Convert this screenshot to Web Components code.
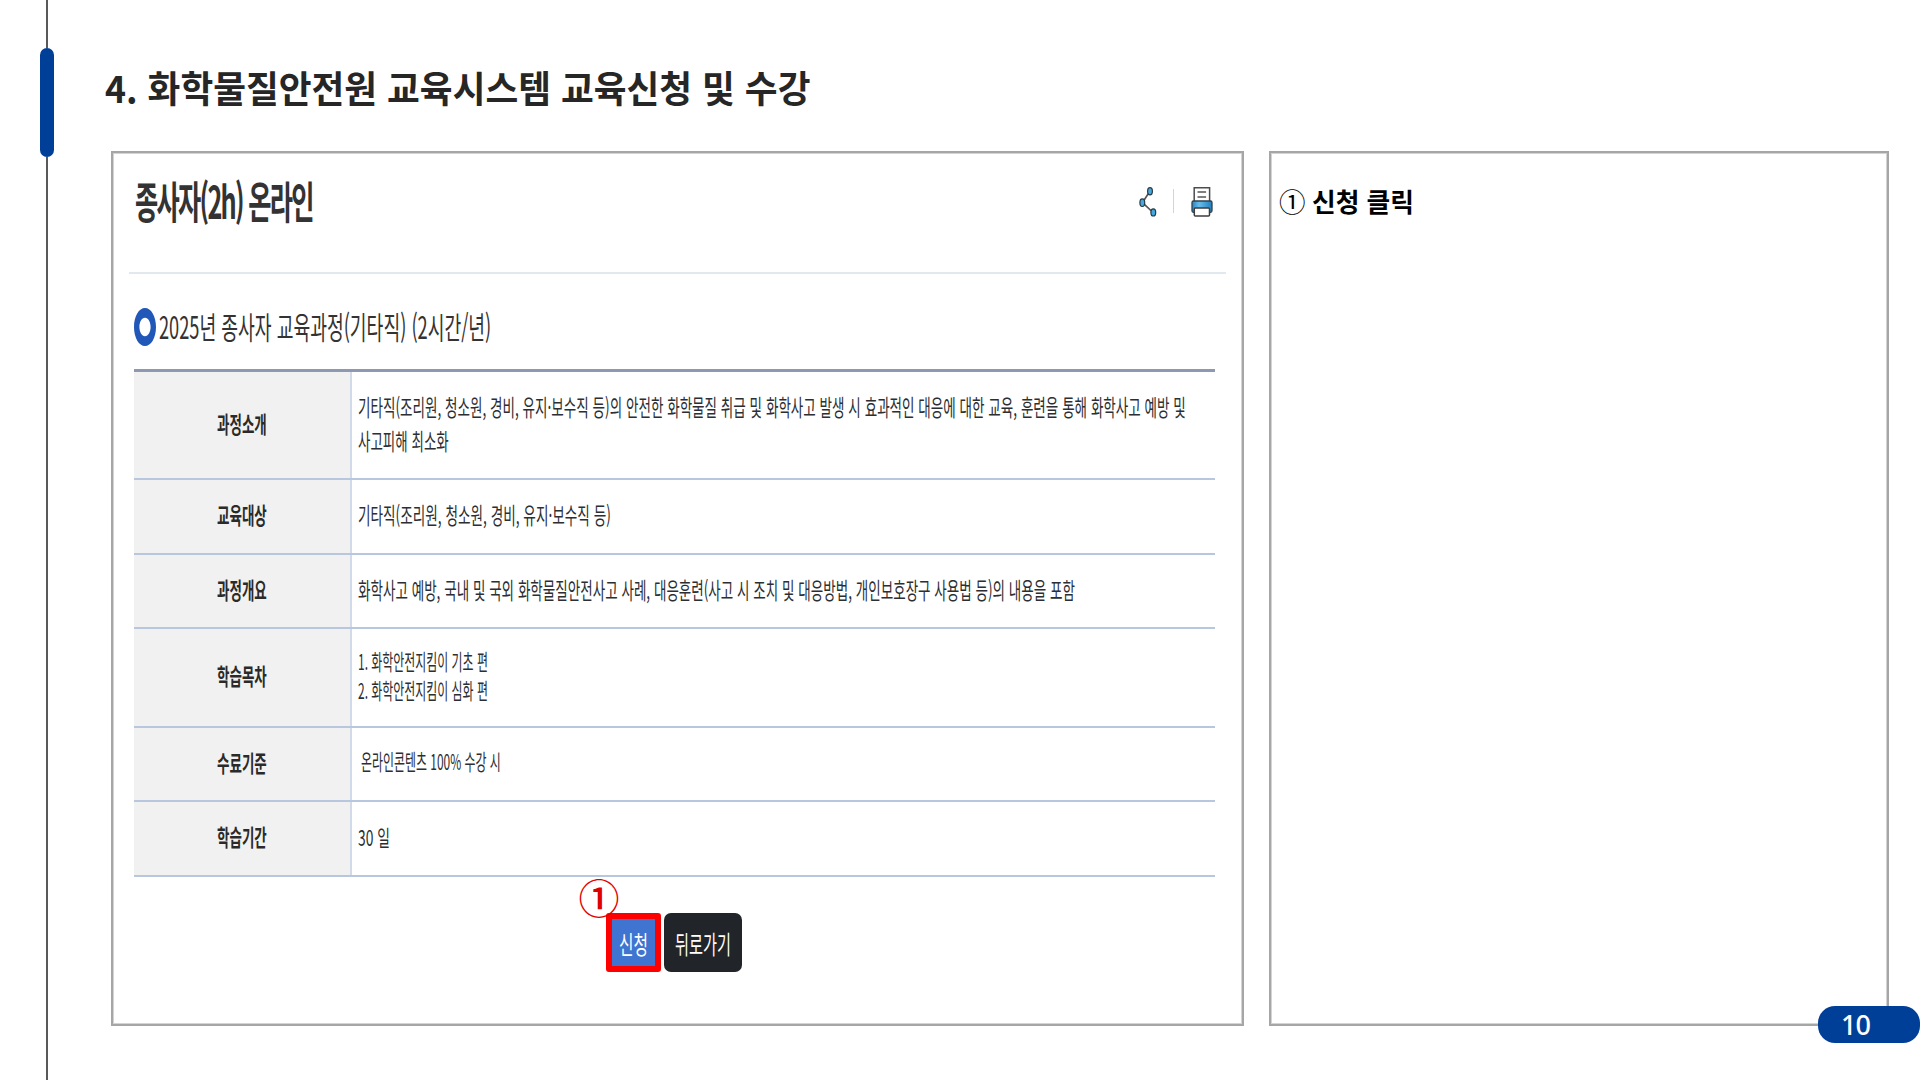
<!DOCTYPE html>
<html lang="ko">
<head>
<meta charset="utf-8">
<title>화학물질안전원 교육시스템</title>
<style>
  body {
    background: #fff;
    font-family: "Noto Sans CJK KR", "Noto Sans", sans-serif;
    margin: 0;
    overflow: hidden;
  }
</style>
</head>
<body>
<guide-slide page="10">
  <fit-text slot="title" w="705" size="37" line="50" weight="700" color="#262626">4. 화학물질안전원 교육시스템 교육신청 및 수강</fit-text>
  <course-card slot="main">
    <fit-text slot="title" w="178" size="44" line="60" weight="700" color="#333" spacing="-3">종사자(2h) 온라인</fit-text>
    <fit-text slot="subtitle" w="332" size="31" line="44" color="#333">2025년 종사자 교육과정(기타직) (2시간/년)</fit-text>
    <course-row label="과정소개" h="108">
      <fit-text w="828" size="23" line="34">기타직(조리원, 청소원, 경비, 유지·보수직 등)의 안전한 화학물질 취급 및 화학사고 발생 시 효과적인 대응에 대한 교육, 훈련을 통해 화학사고 예방 및</fit-text>
      <fit-text w="91" size="23" line="34">사고피해 최소화</fit-text>
    </course-row>
    <course-row label="교육대상" h="75">
      <fit-text w="253" size="23" line="34">기타직(조리원, 청소원, 경비, 유지·보수직 등)</fit-text>
    </course-row>
    <course-row label="과정개요" h="74">
      <fit-text w="717" size="23" line="34">화학사고 예방, 국내 및 국외 화학물질안전사고 사례, 대응훈련(사고 시 조치 및 대응방법, 개인보호장구 사용법 등)의 내용을 포함</fit-text>
    </course-row>
    <course-row label="학습목차" h="99">
      <fit-text w="130" size="21.5" line="29">1. 화학안전지킴이 기초 편</fit-text>
      <fit-text w="130" size="21.5" line="29">2. 화학안전지킴이 심화 편</fit-text>
    </course-row>
    <course-row label="수료기준" h="74" indent="3" lift="2">
      <fit-text w="140" size="21.5" line="34">온라인콘텐츠 100% 수강 시</fit-text>
    </course-row>
    <course-row label="학습기간" h="75">
      <fit-text w="32" size="22" line="34">30 일</fit-text>
    </course-row>
    <action-button slot="actions" kind="apply" step="①"><fit-text w="29" size="25" line="36" color="#fff">신청</fit-text></action-button>
    <action-button slot="actions" kind="back"><fit-text w="56" size="25" line="36" color="#fff">뒤로가기</fit-text></action-button>
  </course-card>
  <step-note slot="side" mark="①"><fit-text w="102" size="26.5" line="40" weight="700" color="#000">신청 클릭</fit-text></step-note>
</guide-slide>

<template id="guide-slide">
  <style>
    :host {
      display: flex;
      height: 1080px;
      position: relative;
      width: 1920px;
    }
    .rail {
      align-items: center;
      display: flex;
      flex-direction: column;
      flex: none;
      margin-left: 40px;
      width: 14px;
    }
    .line {
      background: #595959;
      width: 1.4px;
    }
    .line.top { height: 48px; }
    .line.rest { flex: 1; }
    .marker {
      background: #003f98;
      border-radius: 7px;
      height: 109px;
      width: 14px;
    }
    .content {
      display: flex;
      flex-direction: column;
      margin-left: 51px;
      padding-top: 62px;
    }
    .panels {
      display: grid;
      gap: 25px;
      grid-template-columns: 1133px 620px;
      grid-template-rows: 875px;
      margin: 39px 0 0 6px;
    }
    .panel {
      border: 2px solid #a6a6a6;
      box-shadow: inset 0 0 0 1px #d4d4d4;
      box-sizing: border-box;
    }
    .page {
      background: #003f98;
      border-radius: 17px;
      box-sizing: border-box;
      color: #fff;
      font: 500 27px/38px "Noto Sans", sans-serif;
      height: 37px;
      left: 1818px;
      letter-spacing: -1px;
      padding-left: 23px;
      position: absolute;
      top: 1006px;
      width: 102px;
    }
  </style>
  <div class="rail">
    <div class="line top"></div>
    <div class="marker"></div>
    <div class="line rest"></div>
  </div>
  <div class="content">
    <slot name="title"></slot>
    <div class="panels">
      <div class="panel"><slot name="main"></slot></div>
      <div class="panel"><slot name="side"></slot></div>
    </div>
  </div>
  <div class="page"></div>
</template>

<template id="fit-text">
  <style>
    :host { display: block; }
    span {
      display: inline-block;
      transform-origin: 0 50%;
      white-space: nowrap;
    }
  </style>
  <span><slot></slot></span>
</template>

<template id="course-card">
  <style>
    :host { display: block; }
    header {
      align-items: flex-start;
      border-bottom: 2px solid #e1e8ee;
      box-sizing: border-box;
      display: flex;
      height: 107px;
      justify-content: space-between;
      margin: 14px 16px 0 15.5px;
      padding: 3px 13px 0 6px;
    }
    .tools {
      display: flex;
      padding-top: 16px;
    }
    .tools i {
      background: #ccd6df;
      height: 24px;
      margin: 3px 17px 0 16px;
      width: 1.5px;
    }
    svg { display: block; }
    h3 {
      align-items: center;
      display: flex;
      font-weight: 400;
      gap: 3px;
      height: 44px;
      margin: 30px 0 0 20.5px;
    }
    h3 svg { margin-top: 2px; }
    .table {
      border-top: 3px solid #8e98b0;
      margin: 20.5px 0 0 20.5px;
      width: 1081px;
    }
    .actions {
      display: flex;
      gap: 3px;
      margin: 36.5px 0 0 492.5px;
    }
  </style>
  <header>
    <slot name="title"></slot>
    <div class="tools">
      <svg width="18" height="32" viewBox="0 0 18 32">
        <path d="M11 5 3.5 16.5 14 26.5" fill="none" stroke="#555" stroke-width="1.7"/>
        <g fill="#45a9db" stroke="#263b49" stroke-width="1.2">
          <ellipse cx="11" cy="5.3" rx="2.4" ry="3.6"/>
          <ellipse cx="3.3" cy="16.7" rx="2.4" ry="3.8"/>
          <ellipse cx="14.3" cy="26.4" rx="2.4" ry="3.6"/>
        </g>
      </svg>
      <i></i>
      <svg width="22" height="32" viewBox="0 0 22 32">
        <defs>
          <linearGradient id="ink" x1="0" x2="1">
            <stop offset="0" stop-color="#2583c4"/>
            <stop offset=".35" stop-color="#67bdeb"/>
            <stop offset="1" stop-color="#247dbd"/>
          </linearGradient>
        </defs>
        <path d="M3.2 15V1.7H18.6V15" fill="#fff" stroke="#4c4c4c" stroke-width="1.5"/>
        <path d="M6.5 6h8.6M6.5 11h8.6" stroke="#555" stroke-width="1.5"/>
        <rect x="1" y="15" width="20" height="11.3" rx="1.5" fill="url(#ink)" stroke="#30424e" stroke-width="1.3"/>
        <rect x="3.3" y="22" width="15.2" height="8" rx="1" fill="#fff" stroke="#3d3d3d" stroke-width="1.5"/>
      </svg>
    </div>
  </header>
  <h3>
    <svg width="22" height="38" viewBox="0 0 22 38"><path fill="#2157b8" fill-rule="evenodd" d="M11 0C17 0 22 8 22 19S17 38 11 38 0 30 0 19 5 0 11 0ZM11 9.8C7.8 9.8 5.4 14 5.4 19S7.8 28.2 11 28.2 16.6 24 16.6 19 14.2 9.8 11 9.8Z"/></svg>
    <slot name="subtitle"></slot>
  </h3>
  <div class="table"><slot></slot></div>
  <div class="actions"><slot name="actions"></slot></div>
</template>

<template id="course-row">
  <style>
    :host {
      border-bottom: 2px solid #b9c7de;
      box-sizing: border-box;
      display: grid;
      grid-template-columns: 218px 1fr;
    }
    .label {
      align-items: center;
      background: #f1f1f1;
      border-right: 2px solid #d1dae9;
      box-sizing: border-box;
      display: flex;
      justify-content: center;
      padding-bottom: 4px;
    }
    .value {
      display: flex;
      flex-direction: column;
      justify-content: center;
    }
  </style>
  <div class="label"><fit-text w="50" size="23" line="34" weight="700" color="#2a2a2a"></fit-text></div>
  <div class="value"><slot></slot></div>
</template>

<template id="action-button">
  <style>
    :host {
      box-sizing: border-box;
      display: flex;
      height: 59px;
      align-items: center;
      justify-content: center;
      position: relative;
    }
    :host([kind="apply"]) {
      background: #3f74d0;
      border: 6px solid #f00;
      border-radius: 3px;
      width: 55px;
    }
    :host([kind="back"]) {
      background: #212529;
      border-radius: 7px;
      width: 78px;
    }
    .step {
      color: #e00000;
      font-size: 41px;
      font-weight: 500;
      left: -33px;
      line-height: 50px;
      position: absolute;
      top: -48px;
    }
    .step:empty { display: none; }
  </style>
  <slot></slot>
  <div class="step"></div>
</template>

<template id="step-note">
  <style>
    :host {
      color: #000;
      display: flex;
      gap: 6px;
      padding: 28px 0 0 8px;
    }
    .mark {
      font-size: 26.5px;
      line-height: 40px;
    }
  </style>
  <div class="mark"></div>
  <slot></slot>
</template>

<script>
class BaseElement extends HTMLElement {
  constructor () {
    super()
    this.attachShadow({ mode: 'open' })
    const template = document.getElementById(this.localName)
    this.shadowRoot.appendChild(template.content.cloneNode(true))
  }

  $ (selector) {
    return this.shadowRoot.querySelector(selector)
  }
}

// One line of text, condensed or stretched horizontally to the width in "w".
class FitText extends BaseElement {
  connectedCallback () {
    const span = this.$('span')
    this.style.width = `${this.getAttribute('w')}px`
    this.style.height = `${this.getAttribute('line')}px`
    span.style.fontSize = `${this.getAttribute('size')}px`
    span.style.lineHeight = `${this.getAttribute('line')}px`
    span.style.fontWeight = this.getAttribute('weight') || 400
    span.style.color = this.getAttribute('color') || '#2b2f33'
    span.style.letterSpacing = `${Number(this.getAttribute('spacing'))}px`
    this.fit()
  }

  fit () {
    const span = this.$('span')
    if (!span.offsetWidth) return
    span.style.transform = `scaleX(${this.getAttribute('w') / span.offsetWidth})`
  }
}

class CourseRow extends BaseElement {
  connectedCallback () {
    const label = this.$('fit-text')
    label.textContent = this.getAttribute('label')
    if (label.fit) label.fit()
    this.style.height = `${this.getAttribute('h')}px`
    this.$('.value').style.paddingLeft = `${6 + Number(this.getAttribute('indent'))}px`
    this.$('.value').style.paddingBottom = `${4 + Number(this.getAttribute('lift'))}px`
  }
}

class ActionButton extends BaseElement {
  connectedCallback () {
    this.$('.step').textContent = this.getAttribute('step') || ''
  }
}

class StepNote extends BaseElement {
  connectedCallback () {
    this.$('.mark').textContent = this.getAttribute('mark')
  }
}

class GuideSlide extends BaseElement {
  connectedCallback () {
    this.$('.page').textContent = this.getAttribute('page')
  }
}

class CourseCard extends BaseElement {}

customElements.define('guide-slide', GuideSlide)
customElements.define('course-card', CourseCard)
customElements.define('course-row', CourseRow)
customElements.define('action-button', ActionButton)
customElements.define('step-note', StepNote)
customElements.define('fit-text', FitText)

document.querySelectorAll('fit-text').forEach(el => el.fit())
</script>
</body>
</html>
